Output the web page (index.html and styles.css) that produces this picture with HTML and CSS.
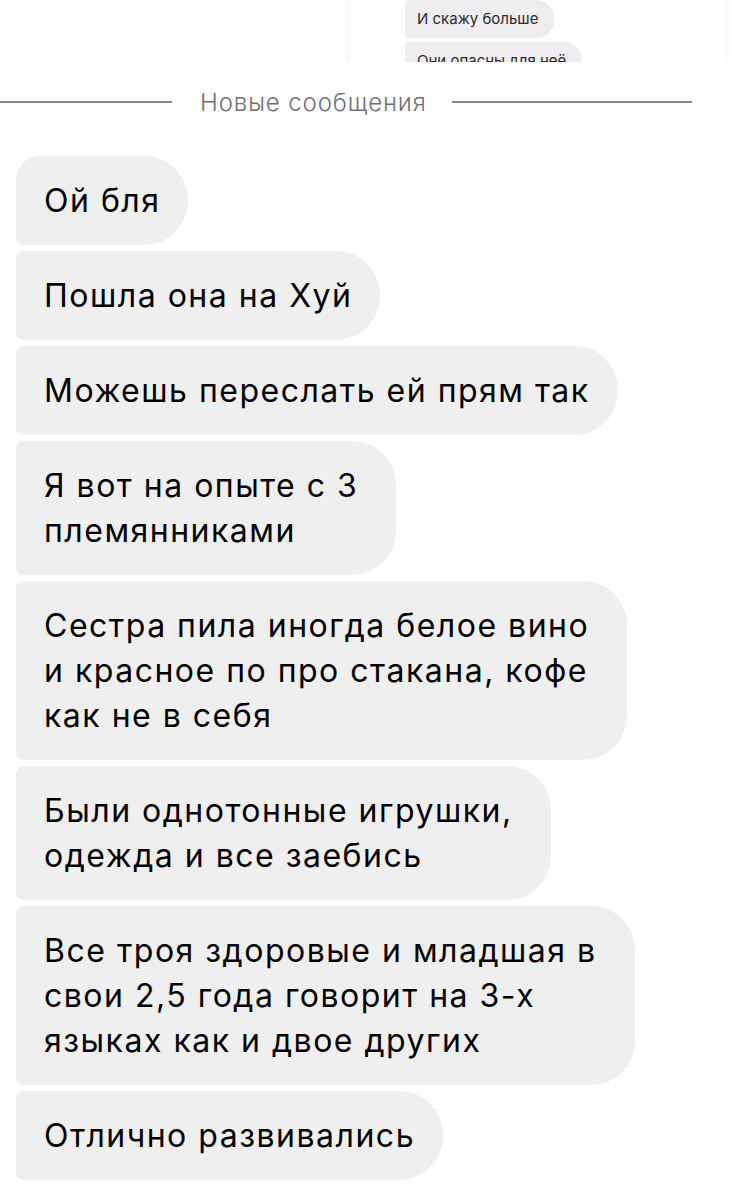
FILE: index.html
```html
<!DOCTYPE html>
<html lang="ru">
<head>
    <meta charset="UTF-8">
    <meta name="viewport" content="width=device-width, initial-scale=1.0">
    <title>Сообщения</title>
    <link rel="stylesheet" href="styles.css">
</head>
<body>
    <div class="reply-preview">
        <div class="reply-card">
            <div class="mini-bubble">И скажу больше</div>
            <div class="mini-bubble">Они опасны для неё</div>
        </div>
    </div>

    <div class="divider">
        <span class="divider-line"></span>
        <span class="divider-text">Новые сообщения</span>
        <span class="divider-line right"></span>
    </div>

    <div class="thread">
        <div class="bubble first">Ой бля</div>
        <div class="bubble">Пошла она на Хуй</div>
        <div class="bubble">Можешь переслать ей прям так</div>
        <div class="bubble multi">Я вот на опыте с 3<br>племянниками</div>
        <div class="bubble multi">Сестра пила иногда белое вино<br>и красное по про стакана, кофе<br>как не в себя</div>
        <div class="bubble multi">Были однотонные игрушки,<br>одежда и все заебись</div>
        <div class="bubble multi">Все троя здоровые и младшая в<br>свои 2,5 года говорит на 3-х<br>языках как и двое других</div>
        <div class="bubble">Отлично развивались</div>
    </div>
</body>
</html>
```

FILE: styles.css
```css
body {
    margin: 0;
    background-color: #ffffff;
    font-family: Inter, "Noto Sans", sans-serif;
    color: #000;
    width: 738px;
}
.reply-preview {
    height: 62px;
    overflow: hidden;
    padding-left: 350px;
}
.reply-card {
    width: 320px;
    height: 90px;
    margin-top: -20px;
    padding: 20px 0 0 55px;
    background-color: #fffdfe;
    border-radius: 28px;
    box-shadow: 0 0 14px rgba(0, 0, 0, 0.06);
}
.mini-bubble {
    display: table;
    background-color: #efedf0;
    color: #2a2a2a;
    font-size: 15px;
    padding: 9px 16px 10px 12px;
    border-radius: 4px 18px 18px 4px;
    margin-bottom: 4px;
}
.divider {
    display: flex;
    align-items: center;
    margin-top: 25px;
    height: 30px;
}
.divider-line {
    width: 172px;
    height: 2px;
    background-color: #8a8a8a;
}
.divider-line.right {
    width: 240px;
}
.divider-text {
    font-size: 24px;
    font-weight: 300;
    color: #6f6f6f;
    letter-spacing: 0.9px;
    padding: 0 25px 0 28px;
}
.thread {
    padding: 39px 0 0 16px;
    display: flex;
    flex-direction: column;
    align-items: flex-start;
    gap: 6px;
}
.bubble {
    background-color: #efefef;
    font-size: 32px;
    line-height: 45px;
    letter-spacing: 1.5px;
    padding: 22px 28px 22px 28px;
    border-radius: 7px 44px 44px 7px;
}
.bubble.first {
    border-top-left-radius: 24px;
}
.bubble.multi {
    padding-right: 38px;
}
```
